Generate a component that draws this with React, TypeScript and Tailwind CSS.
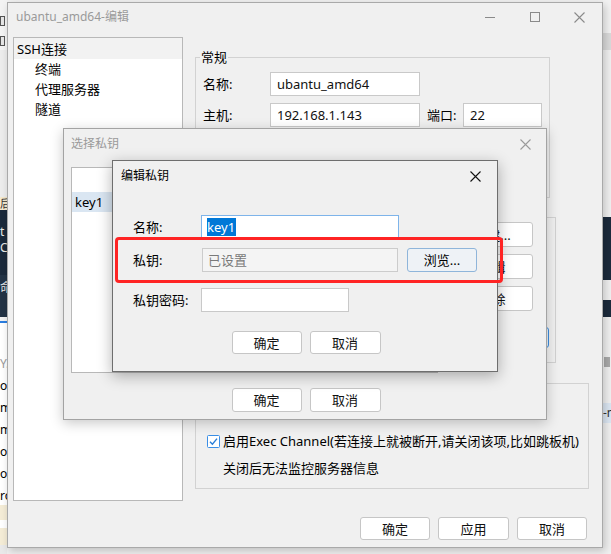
import type { ReactNode } from 'react'

const font = "font-['Noto_Sans','Noto_Sans_CJK_SC',sans-serif]"

function Btn({ children, className = '' }: { children: ReactNode; className?: string }) {
  return (
    <div
      className={`flex items-center justify-center rounded-[3px] border border-[#c6c6c6] bg-white text-[13px] leading-[18px] text-[#111] ${className}`}
    >
      {children}
    </div>
  )
}

function Field({ children, className = '' }: { children?: ReactNode; className?: string }) {
  return (
    <div className={`flex items-center border border-[#c9c9c9] bg-white pl-[6px] text-[13px] leading-[18px] text-[#111] ${className}`}>
      {children}
    </div>
  )
}

function CloseIcon({ color }: { color: string }) {
  return (
    <svg width="11" height="11" viewBox="0 0 11 11">
      <path d="M0.5 0.5 L10.5 10.5 M10.5 0.5 L0.5 10.5" stroke={color} strokeWidth="1.1" fill="none" />
    </svg>
  )
}

/* Strips of the desktop that peek out beside the main window */
function LeftStrip() {
  return (
    <div className="absolute left-0 top-0 flex h-[554px] w-[7px] flex-col overflow-hidden text-[12px] leading-[14px]">
      <div className="flex h-[50px] flex-col gap-[10px] bg-[#f3f3f3] pt-[16px]">
        <div className="h-[10px] w-[5px] border border-[#555] bg-[#e6e6e6]" />
        <div className="h-[10px] w-[5px] border border-[#555] bg-[#e6e6e6]" />
      </div>
      <div className="h-[147px] bg-[#ececec]" />
      <div className="h-[13px] whitespace-nowrap bg-[#f3e8cd] text-[11px] leading-[13px] text-[#333]">后/</div>
      <div className="flex h-[65px] flex-col bg-[#1b2a3b] pt-[14px] text-[12px] leading-[16px] text-[#e8e8e8]">
        <span>t</span>
        <span>C@</span>
      </div>
      <div className="h-[42px] bg-[#233345] pt-[6px] text-[12px] text-[#e8e8e8]">命</div>
      <div className="h-[4px] bg-[#f2f2f2]" />
      <div className="h-[2px] bg-[#2a7de0]" />
      <div className="flex h-[182px] flex-col bg-white pt-[30px] text-[12px] leading-[22px]">
        <span className="text-[#999]">Y.s</span>
        <span>o</span>
        <span>m</span>
        <span>m</span>
        <span>op</span>
        <span>or</span>
        <span>ro</span>
      </div>
      <div className="h-[15px] bg-[#f4ecd6]" />
      <div className="h-[8px] bg-white" />
      <div className="h-[17px] bg-[#f4ecd6]" />
      <div className="flex-1 bg-[#e9e9e9]" />
    </div>
  )
}

function RightStrip() {
  return (
    <div className="absolute right-0 top-0 flex h-[554px] w-[8px] flex-col overflow-hidden text-[12px]">
      <div className="h-[33px] bg-[#f2f2f2]" />
      <div className="h-[17px] bg-[#dadada]" />
      <div className="h-[167px] bg-[#f0f0f0]" />
      <div className="h-[63px] bg-[#1c2b3c]" />
      <div className="h-[20px] bg-[#f0f0f0]" />
      <div className="h-[17px] bg-[#1c2b3c]" />
      <div className="h-[40px] bg-[#f0f0f0]" />
      <div className="h-[11px] bg-[#f0f0f0] pl-[1px]">
        <div className="h-[10px] w-[6px] bg-[#a9a9a9]" />
      </div>
      <div className="h-[35px] bg-[#f0f0f0]" />
      <div className="h-[20px] whitespace-nowrap bg-[#dbe6f2] leading-[20px] text-[#333]">-n</div>
      <div className="flex-1 bg-[#f0f0f0]" />
    </div>
  )
}

function MainWindow() {
  return (
    <div className="absolute left-[7px] top-[2px] flex h-[546px] w-[596px] flex-col border border-[#a9a9a9] bg-[#f0f0f0] shadow-[2px_3px_8px_rgba(0,0,0,0.2)]">
      {/* title bar */}
      <div className="flex h-[28px] items-center justify-between">
        <span className="pl-[8px] text-[12px] leading-[18px] text-[#9a9a9a]">ubantu_amd64-编辑</span>
        <div className="flex h-full">
          <div className="flex w-[45px] items-center justify-center">
            <div className="h-px w-[10px] bg-[#8a8a8a]" />
          </div>
          <div className="flex w-[45px] items-center justify-center">
            <div className="h-[10px] w-[10px] border border-[#8a8a8a]" />
          </div>
          <div className="flex w-[45px] items-center justify-center">
            <CloseIcon color="#8a8a8a" />
          </div>
        </div>
      </div>

      <div className="mt-[6px] flex flex-1 pl-[5px]">
        {/* tree */}
        <div className="flex h-[464px] w-[170px] flex-col border border-[#b8b8b8] bg-white text-[13px] leading-[18px] text-black">
          <div className="flex h-[21px] items-center bg-[#f2f2f2] pl-[3px]">SSH连接</div>
          <div className="flex h-[20px] items-center pl-[21px]">终端</div>
          <div className="flex h-[20px] items-center pl-[21px]">代理服务器</div>
          <div className="flex h-[20px] items-center pl-[21px]">隧道</div>
        </div>

        {/* right pane */}
        <div className="ml-[12px] flex w-[407px] flex-col text-[13px] leading-[18px] text-black">
          <div className="relative mt-[20px] flex h-[141px] w-[355px] flex-col gap-[7px] border border-[#d2d2d2] pl-[7px] pt-[14px]">
            <span className="absolute left-[4px] top-[-10px] bg-[#f0f0f0] px-[1px]">常规</span>
            <div className="flex h-[24px] items-center">
              <span className="w-[67px]">名称:</span>
              <Field className="h-[24px] w-[150px]">ubantu_amd64</Field>
            </div>
            <div className="flex h-[24px] items-center">
              <span className="w-[67px]">主机:</span>
              <Field className="h-[24px] w-[150px]">192.168.1.143</Field>
              <span className="ml-[7px] w-[36px]">端口:</span>
              <Field className="h-[24px] w-[79px]">22</Field>
            </div>
          </div>

          <div className="mt-[19px] flex h-[146px] w-[361px] flex-col border border-[#d2d2d2]">
            <div className="ml-auto mr-[6px] mt-[109px] h-[21px] w-[80px] rounded-[3px] border border-[#3d8ee0] bg-[#e8f1fa]" />
          </div>

          <div className="mt-[20px] flex h-[106px] w-[394px] flex-col border border-[#d2d2d2] pl-[11px] pt-[48px]">
            <div className="flex items-center gap-[3px]">
              <svg width="13" height="13" viewBox="0 0 13 13">
                <rect x="0.5" y="0.5" width="12" height="12" rx="1" fill="#fff" stroke="#3a8ee6" />
                <path d="M3 6.8 L5.4 9.2 L10 3.6" stroke="#2a7ed8" strokeWidth="1.4" fill="none" />
              </svg>
              <span>启用Exec Channel(若连接上就被断开,请关闭该项,比如跳板机)</span>
            </div>
            <span className="mt-[9px] pl-[16px]">关闭后无法监控服务器信息</span>
          </div>

          <div className="mt-[28px] flex justify-end gap-[8px] pr-[15px]">
            <Btn className="h-[23px] w-[70px]">确定</Btn>
            <Btn className="h-[23px] w-[71px]">应用</Btn>
            <Btn className="h-[23px] w-[70px]">取消</Btn>
          </div>
        </div>
      </div>
    </div>
  )
}

function ChooseKeyDialog() {
  return (
    <div className="absolute left-[63px] top-[128px] flex h-[292px] w-[484px] flex-col border border-[#a3a3a3] bg-[#f0f0f0] text-[13px] leading-[18px] shadow-[0_3px_12px_rgba(0,0,0,0.22)]">
      <div className="flex h-[30px] items-center justify-between">
        <span className="pl-[7px] text-[12px] text-[#9a9a9a]">选择私钥</span>
        <div className="flex w-[42px] justify-center">
          <CloseIcon color="#9a9a9a" />
        </div>
      </div>
      <div className="mt-[8px] flex pl-[7px]">
        <div className="flex h-[206px] w-[367px] flex-col border border-[#b8b8b8] bg-white pt-[24px]">
          <div className="flex h-[20px] items-center bg-[#dae6f2] pl-[3px] text-black">key1</div>
        </div>
        <div className="ml-[14px] mt-[55px] flex w-[81px] flex-col gap-[7px]">
          <Btn className="h-[25px]">新建...</Btn>
          <Btn className="h-[25px]">编辑</Btn>
          <Btn className="h-[25px]">删除</Btn>
        </div>
      </div>
      <div className="mt-[15px] flex justify-center gap-[8px] pl-[2px]">
        <Btn className="h-[24px] w-[70px]">确定</Btn>
        <Btn className="h-[24px] w-[71px]">取消</Btn>
      </div>
    </div>
  )
}

function EditKeyDialog() {
  return (
    <div className="absolute left-[112px] top-[160px] flex h-[212px] w-[386px] flex-col border border-[#6e6e6e] bg-[#f0f0f0] text-[13px] leading-[18px] text-black shadow-[0_4px_14px_rgba(0,0,0,0.3)]">
      <div className="flex h-[30px] items-center justify-between">
        <span className="pl-[8px] text-[12px]">编辑私钥</span>
        <div className="flex w-[44px] justify-center">
          <CloseIcon color="#111" />
        </div>
      </div>
      <div className="flex flex-col pl-[20px]">
        <div className="mt-[24px] flex h-[23px] items-center">
          <span className="w-[68px]">名称:</span>
          <div className="flex h-[23px] w-[198px] items-center border border-[#7eb4ea] bg-white pl-[5px]">
            <span className="bg-[#0078d7] pr-[1px] text-white">key1</span>
          </div>
        </div>
        <div className="mt-[10px] flex h-[24px] items-center">
          <span className="w-[69px]">私钥:</span>
          <div className="flex h-[24px] w-[196px] items-center border border-[#cccccc] bg-[#f4f4f4] pl-[5px] text-[#7a7a7a]">
            已设置
          </div>
          <div className="ml-[9px] flex h-[24px] w-[70px] items-center justify-center rounded-[3px] border border-[#8fb5da] bg-[#eef2f6]">
            浏览...
          </div>
        </div>
        <div className="mt-[16px] flex h-[24px] items-center">
          <span className="w-[68px]">私钥密码:</span>
          <Field className="h-[24px] w-[148px]" />
        </div>
      </div>
      <div className="mt-[19px] flex justify-center gap-[8px] pl-[2px]">
        <Btn className="h-[23px] w-[70px]">确定</Btn>
        <Btn className="h-[23px] w-[71px]">取消</Btn>
      </div>
    </div>
  )
}

export default function App() {
  return (
    <div className={`relative h-[554px] w-[611px] overflow-hidden bg-[#f0f0f0] ${font}`}>
      <LeftStrip />
      <RightStrip />
      <MainWindow />
      <ChooseKeyDialog />
      <EditKeyDialog />
      {/* red annotation box */}
      <div className="absolute left-[115px] top-[237px] h-[46px] w-[388px] rounded-[4px] border-[3px] border-[#ff2424]" />
    </div>
  )
}
